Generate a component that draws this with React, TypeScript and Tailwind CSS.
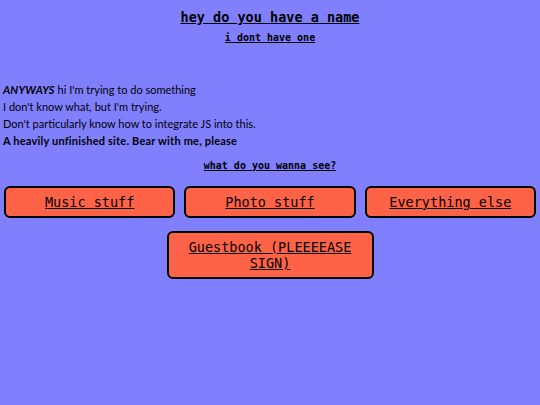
export default function App() {
  const links = ["Music stuff", "Photo stuff", "Everything else"];
  return (
    <div className="h-[405px] w-full bg-[#8080ff] text-black overflow-hidden">
      <h1 className="pt-[8px] text-center font-['DejaVu_Sans_Mono',monospace] text-[13.5px] font-bold leading-[18px] underline">
        hey do you have a name
      </h1>
      <h2 className="mt-[5px] text-center font-['DejaVu_Sans_Mono',monospace] text-[10px] font-bold leading-[14px] underline">
        i dont have one
      </h2>

      <div className="mt-[36px] px-[3px] font-['Lato',sans-serif] text-[11px] leading-[17px]">
        <p>
          <b className="tracking-[0.2px]">
            <i>ANYWAYS</i>
          </b>{" "}
          hi I'm trying to do something
        </p>
        <p>I don't know what, but I'm trying.</p>
        <p>Don't particularly know how to integrate JS into this.</p>
        <p className="font-bold tracking-[0.2px]">A heavily unfinished site. Bear with me, please</p>
      </div>

      <p className="mt-[10px] text-center font-['DejaVu_Sans_Mono',monospace] text-[10px] font-bold leading-[14px] underline">
        what do you wanna see?
      </p>

      <div className="mt-[13px] grid grid-cols-3 gap-[9px] px-[4px]">
        {links.map((l) => (
          <a
            key={l}
            href="#"
            className="flex h-[32px] items-center justify-center rounded-[6px] border-2 border-black bg-[#ff6347] font-['DejaVu_Sans_Mono',monospace] text-[13.5px] text-black underline"
          >
            {l}
          </a>
        ))}
      </div>

      <div className="mt-[13px] flex justify-center">
        <a
          href="#"
          className="flex h-[48px] w-[207px] items-center justify-center rounded-[6px] border-2 border-black bg-[#ff6347] px-[20px] text-center font-['DejaVu_Sans_Mono',monospace] text-[13.5px] leading-[16px] text-black underline"
        >
          Guestbook (PLEEEEASE SIGN)
        </a>
      </div>
    </div>
  );
}
